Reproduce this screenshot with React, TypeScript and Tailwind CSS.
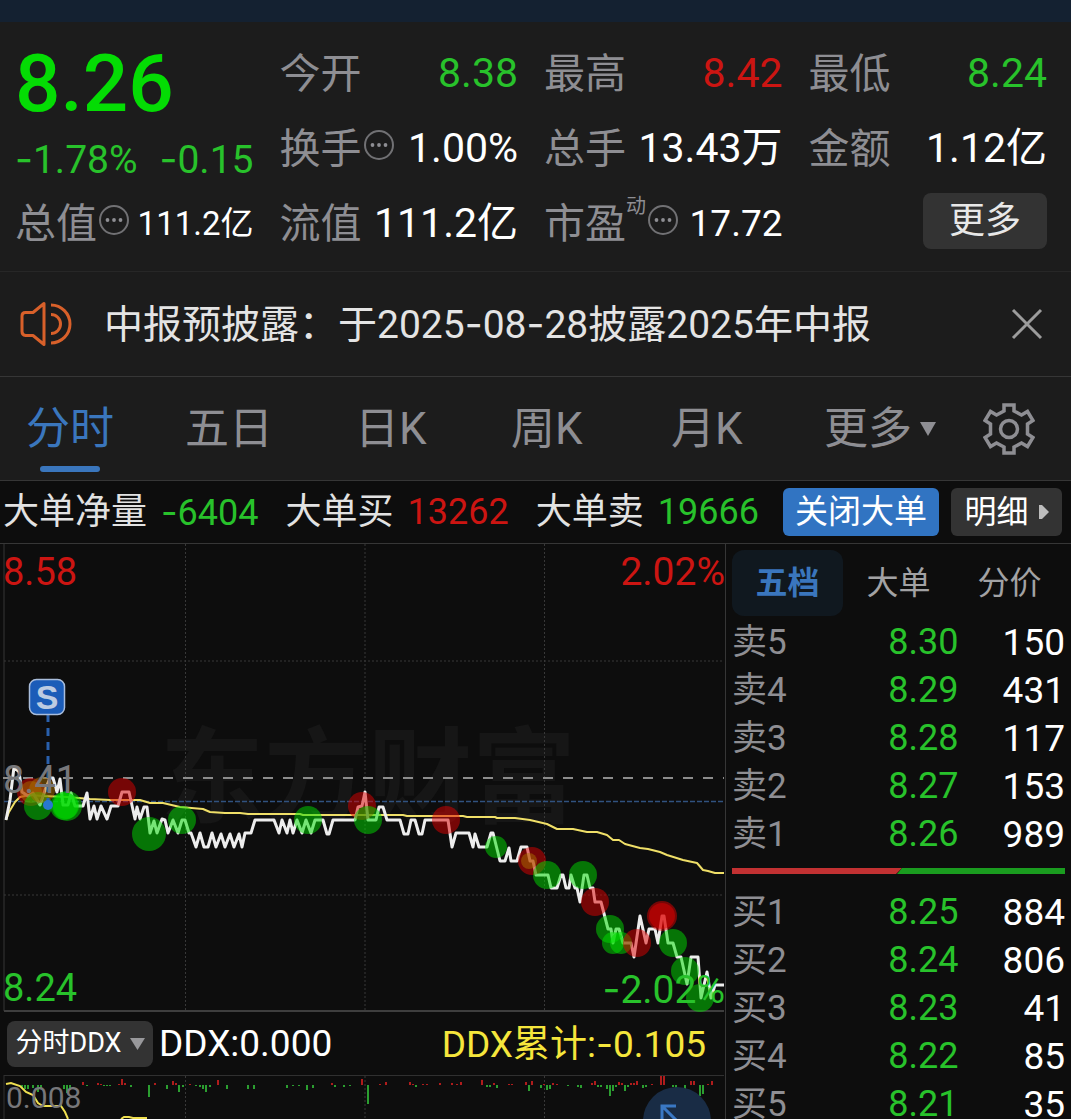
import { Fragment, type ReactNode } from "react";

const GREEN = "text-[#28c22b]";
const RED = "text-[#cc1512]";

/** Figures with a wider dash glyph than the digits' own face offers. */
function Num({ children }: { children: string }) {
  const parts = children.split("-");
  return (
    <>
      {parts.map((p, i) => (
        <Fragment key={i}>
          {i > 0 && <span className="font-['Inter']">-</span>}
          {p}
        </Fragment>
      ))}
    </>
  );
}

function MoreDots() {
  return (
    <svg viewBox="0 0 34 40" className="h-10 w-[34px] shrink-0" aria-hidden="true">
      <circle cx="17" cy="16" r="14" fill="none" stroke="#717174" strokeWidth="2" />
      <circle cx="10.5" cy="16" r="1.9" fill="#8e8e93" />
      <circle cx="17" cy="16" r="1.9" fill="#8e8e93" />
      <circle cx="23.5" cy="16" r="1.9" fill="#8e8e93" />
    </svg>
  );
}

function Stat({
  label,
  value,
  tone = "text-white",
  info = false,
  sup,
  size = "text-[41px]",
}: {
  label: string;
  value: string;
  tone?: string;
  info?: boolean;
  sup?: string;
  size?: string;
}) {
  return (
    <div className="flex h-[75px] items-center justify-between whitespace-nowrap">
      <span className="flex items-center text-[41px] leading-[44px] text-[#8e8e93]">
        {label}
        {sup && <sup className="top-0 h-14 text-[20px] leading-5">{sup}</sup>}
        {info && <MoreDots />}
      </span>
      <span className={`${size} ${tone} leading-none`}>{value}</span>
    </div>
  );
}

function Quote() {
  return (
    <section className="border-b border-[#272727] pt-[14px] pr-6 pb-[10px] pl-[15px]">
      <div className="grid grid-cols-4 gap-[26px]">
        <div>
          <div className="flex h-24 items-center text-[80px] leading-none font-medium text-[#04dc04]">8.26</div>
          <div className={`flex h-[54px] items-center justify-between text-[39px] leading-none ${GREEN}`}>
            <span><Num>-1.78%</Num></span>
            <span><Num>-0.15</Num></span>
          </div>
          <Stat label="总值" value="111.2亿" info size="text-[33px]" />
        </div>
        <div>
          <Stat label="今开" value="8.38" tone={GREEN} />
          <Stat label="换手" value="1.00%" info />
          <Stat label="流值" value="111.2亿" />
        </div>
        <div>
          <Stat label="最高" value="8.42" tone={RED} />
          <Stat label="总手" value="13.43万" />
          <Stat label="市盈" value="17.72" sup="动" info size="text-[37px]" />
        </div>
        <div>
          <Stat label="最低" value="8.24" tone={GREEN} />
          <Stat label="金额" value="1.12亿" />
          <div className="flex h-[70px] items-center justify-end">
            <button className="h-14 w-[124px] rounded-lg bg-[#333333] text-[36px] leading-none text-[#e8e8e8]">更多</button>
          </div>
        </div>
      </div>
    </section>
  );
}

function Notice() {
  return (
    <section className="flex h-[105px] items-center border-b border-[#363636] pr-[26px] pl-5">
      <svg viewBox="0 0 52 46" className="h-[46px] w-[52px] shrink-0" fill="none" stroke="#d8602a" strokeWidth="3" strokeLinejoin="round" aria-hidden="true">
        <path d="M24 2.5V43.500L13 34.500H5.500Q2 34 2 30.500V15Q2 11.500 5.500 11.500H13Z" />
        <path d="M31 13.500A9.500 9.500 0 0 1 31 32.500M31 4A19 19 0 0 1 31 42" />
      </svg>
      <p className="ml-8 flex-1 text-[39px] leading-none whitespace-nowrap text-[#e4e4e4]">
        <Num>中报预披露：于2025-08-28披露2025年中报</Num>
      </p>
      <button aria-label="关闭" className="flex size-9 items-center justify-center">
        <svg viewBox="0 0 32 32" className="size-8" stroke="#9c9c9c" strokeWidth="3" aria-hidden="true">
          <path d="M2 2L30 30M30 2L2 30" />
        </svg>
      </button>
    </section>
  );
}

function Tabs() {
  return (
    <nav className="grid h-26 grid-cols-[159fr_170fr_156fr_160fr_153fr_159fr_52fr] items-center border-b border-[#363636] pr-9 pl-[26px] text-[44px] leading-[48px] text-[#8e8e93]">
      <button className="relative w-fit text-[#3a76bd]">
        分时
        <span className="absolute -bottom-[19px] left-1/2 h-1.5 w-15 -translate-x-1/2 rounded-full bg-[#3a76bd]" />
      </button>
      <button className="w-fit">五日</button>
      <button className="w-fit">日K</button>
      <button className="w-fit">周K</button>
      <button className="w-fit">月K</button>
      <button className="flex w-fit items-center gap-2">
        更多
        <svg viewBox="0 0 16 14" className="h-3.5 w-4" fill="#8e8e93" aria-hidden="true">
          <path d="M0 0H16L8 14Z" />
        </svg>
      </button>
      <button aria-label="设置" className="size-[52px]">
        <svg viewBox="0 0 52 52" className="size-full" fill="none" stroke="#8e8e93" strokeWidth="3.500" aria-hidden="true">
          <path d="M21 2H31V8L38.500 12L44.500 8.500L50 17.500L44.500 21V31L50 34.500L44.500 43.500L38.500 40L31 44V50H21V44L13.500 40L7.500 43.500L2 34.500L7.500 31V21L2 17.500L7.500 8.500L13.500 12L21 8Z" />
          <circle cx="26" cy="26" r="8.500" />
        </svg>
      </button>
    </nav>
  );
}

function Flow({ label, value, tone }: { label: string; value: string; tone: string }) {
  return (
    <span className="flex items-center gap-[14px]">
      <span className="text-[#e2e2e2]">{label}</span>
      <span className={tone}><Num>{value}</Num></span>
    </span>
  );
}

function BigOrders() {
  return (
    <section className="flex h-[63px] items-center border-b border-[#363636] bg-[#0d0d0d] pr-[9px] pl-[3px] text-[36px] leading-10 whitespace-nowrap">
      <div className="flex flex-1 gap-[27px]">
        <Flow label="大单净量" value="-6404" tone={GREEN} />
        <Flow label="大单买" value="13262" tone={RED} />
        <Flow label="大单卖" value="19666" tone={GREEN} />
      </div>
      <button className="h-12 w-[156px] rounded-md bg-[#3174c2] text-[33px] text-white">关闭大单</button>
      <button className="ml-3 flex h-12 w-[111px] items-center justify-center gap-[10px] rounded-md bg-[#333333] text-[32px] text-white">
        明细
        <svg viewBox="0 0 10 14" className="h-3.5 w-2.5" fill="#bdbdbd" aria-hidden="true">
          <path d="M0 0H3L10 7L3 14H0Z" />
        </svg>
      </button>
    </section>
  );
}

const PRICE =
  "6,820 10,800 14,767 19,772 22,792 28,796 33,793 40,805 45,790 50,778 53,778 57,792 60,779 63,805 68,805 71,793 75,806 83,806 87,793 90,819 94,806 97,819 101,806 107,819 111,806 118,806 122,792 129,792 135,819 137,807 140,819 144,807 147,807 150,833 154,821 157,833 162,819 165,820 168,833 173,820 178,833 182,820 185,820 189,833 191,833 196,847 200,833 204,847 208,847 212,833 216,847 221,834 225,847 230,834 234,847 239,834 242,847 245,833 251,833 255,820 274,820 279,833 282,820 287,833 290,820 293,833 297,820 302,833 306,820 311,833 315,820 323,820 327,834 329,834 333,820 355,820 358,807 362,806 365,792 368,820 376,820 379,807 383,807 387,820 400,820 404,834 408,834 411,820 415,820 419,834 422,834 425,820 448,820 452,847 456,833 469,833 473,847 475,834 479,847 487,847 491,833 493,833 500,861 505,861 509,848 511,861 517,861 521,847 527,847 530,861 533,861 536,875 548,875 551,888 557,888 561,875 563,875 566,888 569,888 571,875 575,888 577,888 580,902 584,875 587,875 590,888 593,888 595,902 601,902 608,929 611,929 613,943 616,929 619,929 623,943 631,943 634,957 640,916 646,943 649,929 655,929 658,943 662,916 664,916 668,943 673,943 677,957 681,957 687,984 691,957 698,957 701,998 707,972 711,998 715,985 724,985";

const AVERAGE =
  "6,820 9,812 15,802 20,797 30,795 43,796 67,797 90,799 110,800 140,800 150,803 163,803 180,807 203,809 210,812 225,813 240,813 248,814 300,814 303,815 403,815 407,816 463,816 467,817 495,817 497,818 515,818 530,820 547,824 557,829 573,829 587,832 597,832 607,835 613,840 619,840 625,844 640,848 648,849 660,852 667,855 683,860 697,863 703,870 708,871 715,873 724,873";

type Dot = [x: number, y: number, r: number, color: "g" | "r" | "o"];
const DOTS: Dot[] = [
  [31, 792, 14, "r"], [31, 792, 11, "o"], [38, 806, 14, "g"], [42, 790, 13, "o"], [64, 806, 14, "g"], [67, 806, 15, "g"], [66, 806, 13, "g"],
  [122, 792, 14, "r"], [149, 834, 17, "g"], [182, 820, 14, "g"], [308, 820, 14, "g"],
  [362, 806, 14, "r"], [368, 820, 14, "g"], [446, 820, 14, "r"], [496, 847, 11, "g"],
  [532, 861, 14, "r"], [529, 861, 8, "o"], [547, 875, 14, "g"], [583, 875, 14, "g"], [595, 902, 14, "r"],
  [610, 929, 14, "g"], [613, 943, 11, "g"], [621, 943, 11, "g"], [637, 943, 14, "r"],
  [662, 916, 15, "r"], [662, 916, 13, "r"], [673, 943, 14, "g"], [685, 971, 14, "g"], [700, 998, 14, "g"],
];
const DOT_FILL = { g: "#00dd00", r: "#e00000", o: "#a87000" };

function PriceChart() {
  return (
    <div className="relative h-[468px] overflow-hidden text-[38px] leading-none">
      <span className="absolute top-[184px] left-40 text-[104px] font-bold whitespace-nowrap text-[#161616]" aria-hidden="true">东方财富</span>
      <svg viewBox="0 544 725 468" preserveAspectRatio="none" className="absolute inset-0 size-full" fill="none" role="img" aria-label="分时走势">
        <path d="M185.500 544V1010M365 544V1010M544.500 544V1010M4 661H724M4 895H724" stroke="#383838" strokeDasharray="2 2" />
        <path d="M4 544V1011" stroke="#363636" />
        <path d="M4 1011H724" stroke="#3e3e3e" strokeWidth="2" />
        <path d="M3 778H724" stroke="#8c8c8c" strokeWidth="1.800" strokeDasharray="10 10" />
        <path d="M4 801.500H724" stroke="#30527f" strokeWidth="1.500" strokeDasharray="5 2" />
        <polyline points={AVERAGE} stroke="#efdf68" strokeWidth="2" strokeLinejoin="round" />
        <polyline points={PRICE} stroke="#ededed" strokeWidth="3" strokeLinejoin="round" />
        {DOTS.map(([x, y, r, c], i) => (
          <circle key={i} cx={x} cy={y} r={r} fill={DOT_FILL[c]} fillOpacity="0.500" />
        ))}
        <path d="M48 714V802" stroke="#2960ad" strokeWidth="3" strokeDasharray="8 6" />
        <circle cx="48" cy="805" r="5" fill="#2878d0" />
        <rect x="29.500" y="679.500" width="35" height="35" rx="7" fill="#1b5cb8" stroke="#a9bddb" strokeWidth="1.500" />
        <text x="47" y="709" textAnchor="middle" fontSize="34" fontWeight="700" fill="#bccbe2" fontFamily="Liberation Sans">S</text>
      </svg>
      <span className={`absolute top-[9px] left-[3px] ${RED}`}>8.58</span>
      <span className={`absolute top-[9px] right-0 text-[39px] ${RED}`}>2.02%</span>
      <span className="absolute top-[217px] left-[3px] text-[#77777a]">8.41</span>
      <span className={`absolute top-[425px] left-[3px] ${GREEN}`}>8.24</span>
      <span className={`absolute top-[425px] right-0 text-[39px] ${GREEN}`}><Num>-2.02%</Num></span>
    </div>
  );
}

/** Bars of the sub-chart: x and signed height about the zero line. */
const BARS: [number, number][] = [
  [22, -3], [25, -4], [28, -4], [33, -3], [38, -7], [41, -3], [64, -4], [67, -8], [70, -5], [83, 3], [87, -1], [98, 2], [101, 1],
  [104, -1], [107, -1], [110, -1], [119, 1], [122, 6], [125, 2], [131, -2], [149, -12], [155, 2], [167, -4], [173, 4], [176, 2], [179, -7], [183, -2],
  [190, 1], [196, -1], [200, -2], [203, -4], [206, -7], [210, -2], [218, 5], [227, -4], [248, -4], [254, -4], [287, -3], [293, -1], [299, -1], [307, -5],
  [313, -3], [332, 2], [335, -2], [344, -2], [350, -1], [362, 6], [368, -19], [380, 1], [386, 3], [410, 3], [413, 1], [416, -2], [423, 1], [427, 1], [440, 2],
  [452, 2], [457, 1], [461, 3], [482, 5], [487, -2], [490, -2], [494, 2], [497, -3], [509, 1], [512, 1], [526, 3], [529, -6], [532, 4], [541, -3], [544, 1],
  [547, -5], [550, -4], [553, 2], [557, 1], [568, -1], [578, -2], [581, -3], [592, 2], [595, 4], [598, -2], [601, -2], [607, -4], [610, -11], [613, -6],
  [616, -2], [619, 3], [622, 2], [625, -6], [628, -2], [631, 2], [634, 2], [637, 4], [643, -3], [646, -2], [652, 1], [661, 9], [664, 9], [673, -2], [676, -4],
  [685, -4], [691, 4], [694, 4], [700, -11], [703, -9], [708, 1], [712, 4],
];

function DdxPanel() {
  return (
    <>
      <div className="flex h-[63px] items-center pr-[19px] pl-[7px] text-[37px] leading-none whitespace-nowrap text-white">
        <button className="flex h-[46px] w-[146px] items-center justify-center gap-2 rounded-lg bg-[#333333] text-[27px]">
          分时DDX
          <svg viewBox="0 0 15 12" className="h-3 w-[15px]" fill="#98989b" aria-hidden="true">
            <path d="M0 0H15L7.500 12Z" />
          </svg>
        </button>
        <span className="ml-1.5 flex-1">DDX:0.000</span>
        <span className="text-[#f5e63c]"><Num>DDX累计:-0.105</Num></span>
      </div>
      <div className="relative min-h-0 flex-1 overflow-hidden">
        <svg viewBox="0 1075 725 44" preserveAspectRatio="none" className="absolute top-0 left-0 h-11 w-full" fill="none" role="img" aria-label="DDX">
          <path d="M4 1075.500H724M4 1075V1119" stroke="#303030" />
          <path d="M185.500 1076V1119M365 1076V1119M544.500 1076V1119" stroke="#383838" strokeDasharray="2 2" />
          {BARS.map(([x, h]) => (
            <rect key={x} x={x - 1} y={h > 0 ? 1085 - h : 1085} width="2" height={Math.abs(h)} fill={h > 0 ? "#b01c1c" : "#2b9e30"} />
          ))}
          <path d="M6 1084L11 1083L20 1086L26 1092L33 1095L38 1103L43 1106H61L65 1112L68 1119M121 1119L124 1117L129 1117L133 1118H147" stroke="#efdf50" strokeWidth="2" />
        </svg>
        <span className="absolute top-2 left-1.5 text-[30px] leading-none text-[#77777a]">0.008</span>
        <button aria-label="展开" className="absolute top-3 right-[14px] size-17 rounded-full bg-[#192c45]">
          <svg viewBox="0 0 68 68" className="size-full" fill="none" stroke="#3a78c4" strokeWidth="3" aria-hidden="true">
            <path d="M33 19H19V33M19 19L48 48" />
          </svg>
        </button>
      </div>
    </>
  );
}

const ASKS = [["卖5", "8.30", "150"], ["卖4", "8.29", "431"], ["卖3", "8.28", "117"], ["卖2", "8.27", "153"], ["卖1", "8.26", "989"]];
const BIDS = [["买1", "8.25", "884"], ["买2", "8.24", "806"], ["买3", "8.23", "41"], ["买4", "8.22", "85"], ["买5", "8.21", "35"]];

function Levels({ rows }: { rows: string[][] }) {
  return (
    <table className="w-full table-fixed text-right text-[37px] leading-none">
      <tbody>
        {rows.map(([name, price, volume]) => (
          <tr key={name} className="h-12">
            <th scope="row" className="w-[30%] p-0 text-left text-[35px] font-normal text-[#8e8e93]">{name}</th>
            <td className={`p-0 text-[36px] ${GREEN}`}>{price}</td>
            <td className="w-[32%] p-0 text-white">{volume}</td>
          </tr>
        ))}
      </tbody>
    </table>
  );
}

function BookTab({ children, active = false }: { children: ReactNode; active?: boolean }) {
  return (
    <button className={active ? "h-[66px] rounded-xl bg-[#10181f] font-bold text-[#3a76bd]" : "h-[66px] text-[#a2a2a4]"}>{children}</button>
  );
}

function OrderBook() {
  return (
    <aside className="min-h-0 pt-1.5 pr-1.5 pl-1.5">
      <div className="mb-0.5 grid grid-cols-3 text-[32px] leading-9">
        <BookTab active>五档</BookTab>
        <BookTab>大单</BookTab>
        <BookTab>分价</BookTab>
      </div>
      <Levels rows={ASKS} />
      <svg viewBox="0 0 333 6" preserveAspectRatio="none" className="mt-[10px] mb-[14px] h-1.5 w-full" aria-hidden="true">
        <path d="M0 0H170L164 6H0Z" fill="#c23132" />
        <path d="M170 0H333V6H165Z" fill="#1a9c1f" />
      </svg>
      <Levels rows={BIDS} />
    </aside>
  );
}

export default function App() {
  return (
    <main className="flex h-screen flex-col overflow-hidden bg-[#1c1c1c] font-[Roboto,'Noto_Sans_CJK_SC',sans-serif]">
      <div className="h-[22px] shrink-0 bg-[#142131]" />
      <Quote />
      <Notice />
      <Tabs />
      <BigOrders />
      <div className="grid min-h-0 flex-1 grid-cols-[726fr_345fr] bg-[#0d0d0d]">
        <section className="flex min-h-0 flex-col border-r border-[#363636]">
          <PriceChart />
          <DdxPanel />
        </section>
        <OrderBook />
      </div>
    </main>
  );
}
